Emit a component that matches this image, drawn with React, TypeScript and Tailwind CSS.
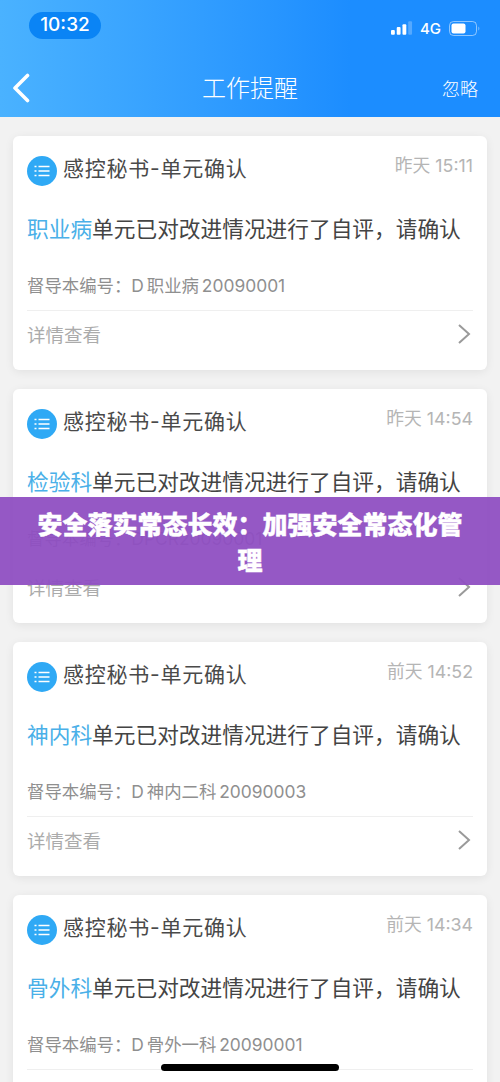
const sans = 'font-["Inter","Noto_Sans_CJK_SC",sans-serif]';

interface Reminder {
  dept: string;
  time: string;
  code: string;
}

const reminders: Reminder[] = [
  { dept: '职业病', time: '昨天 15:11', code: 'D 职业病 20090001' },
  { dept: '检验科', time: '昨天 14:54', code: 'DPCR20090001' },
  { dept: '神内科', time: '前天 14:52', code: 'D 神内二科 20090003' },
  { dept: '骨外科', time: '前天 14:34', code: 'D 骨外一科 20090001' },
];

function ListBadge() {
  return (
    <div className="flex h-[30px] w-[30px] shrink-0 items-center justify-center rounded-full bg-[#2fa9f5]">
      <svg width="16" height="12" viewBox="0 0 16 12" fill="none" stroke="white" strokeWidth="1.6">
        <path d="M0.5 1.5h2M0.5 6h2M0.5 10.5h2" />
        <path d="M4.5 1.5h11M4.5 6h11M4.5 10.5h11" />
      </svg>
    </div>
  );
}

function ReminderCard({ item }: { item: Reminder }) {
  return (
    <div className="mx-[13px] h-[234px] rounded-md bg-white px-[14px] pt-[20px] shadow-[0_2px_10px_rgba(0,0,0,0.07)]">
      <div className="flex h-[30px] items-start">
        <ListBadge />
        <div className="ml-[6px] mt-[-2px] h-[30px] text-[21px] leading-[30px] tracking-[0.75px] text-[#4a4a4a]">感控秘书-单元确认</div>
        <div className="ml-auto mt-[-5px] text-[17.8px] leading-[30px] text-[#b5b5b5]">{item.time}</div>
      </div>
      <div className="mt-[27px] whitespace-nowrap text-[21.7px] leading-[32px] text-[#444444]">
        <span className="text-[#4ab0e8]">{item.dept}</span>单元已对改进情况进行了自评，请确认
      </div>
      <div className="mt-[28px] whitespace-nowrap text-[17.4px] leading-[26px] text-[#8f8f8f] [word-spacing:-2px]">
        督导本编号：{item.code}
      </div>
      <div className="mt-[11px] flex h-[50px] items-center justify-between border-t border-[#efefef]">
        <span className="text-[18.5px] text-[#ababab]">详情查看</span>
        <svg width="14" height="22" viewBox="0 0 14 22" fill="none" stroke="#9a9a9a" strokeWidth="2" className="mb-[4px] mr-[2px]">
          <path d="M2 2l10 9-10 9" />
        </svg>
      </div>
    </div>
  );
}

export default function App() {
  return (
    <div className={`relative h-[1082px] w-[500px] overflow-hidden bg-[#f2f2f2] ${sans}`}>
      <header className="h-[117px] bg-gradient-to-r from-[#4ab2ff] to-[#1c8dff] to-[70%] text-white">
        <div className="flex h-[60px] items-start pl-[29px] pr-[19px] pt-[12px]">
          <div className="flex h-[27px] w-[72px] items-center justify-center rounded-full bg-[#0a84f5] text-[19px] font-medium">
            10:32
          </div>
          <div className="ml-auto mt-[9px] flex items-center">
            <svg width="22" height="15" viewBox="0 0 23 15" fill="white">
              <rect x="0" y="9" width="4" height="5" rx="1" />
              <rect x="6" y="6" width="4" height="8" rx="1" />
              <rect x="12" y="3" width="4" height="11" rx="1" />
              <rect x="18" y="0" width="4" height="14" rx="1" opacity="0.25" />
            </svg>
            <span className="ml-[7px] text-[15px] font-medium leading-none">4G</span>
            <svg width="32" height="15" viewBox="0 0 32 15" fill="none" className="ml-[8px]">
              <rect x="0.5" y="0.5" width="27" height="14" rx="4" stroke="white" strokeOpacity="0.5" />
              <rect x="2.5" y="2.5" width="14" height="10" rx="2" fill="white" />
              <path d="M29.5 5.5c1 .4 1 3.6 0 4z" fill="white" fillOpacity="0.6" />
            </svg>
          </div>
        </div>
        <div className="relative flex h-[57px] items-start justify-between pl-[12px] pr-[22px]">
          <svg width="18" height="30" viewBox="0 0 18 30" fill="none" stroke="white" strokeWidth="3.6" strokeLinecap="round" strokeLinejoin="round" className="mt-[13px]">
            <path d="M15.5 2.5L3 15l12.5 12.5" />
          </svg>
          <div className="absolute inset-x-0 top-[12px] text-center text-[24px] font-light leading-[34px]">工作提醒</div>
          <div className="mt-[16px] text-[18px] font-light leading-[28px]">忽略</div>
        </div>
      </header>

      <div className="mt-[19px] flex flex-col gap-[19px]">
        {reminders.map((item) => (
          <ReminderCard key={item.dept} item={item} />
        ))}
      </div>

      <div className="absolute inset-x-0 top-[497px] flex h-[88px] items-center justify-center bg-[#8f4fc2]/95 px-[36px] pt-[3px] text-center text-[25px] font-black leading-[36px] text-white [-webkit-text-stroke:0.4px_white]">
        安全落实常态长效：加强安全常态化管理
      </div>

      <div className="absolute bottom-[11px] left-[161px] h-[7px] w-[178px] rounded-full bg-black" />
    </div>
  );
}
